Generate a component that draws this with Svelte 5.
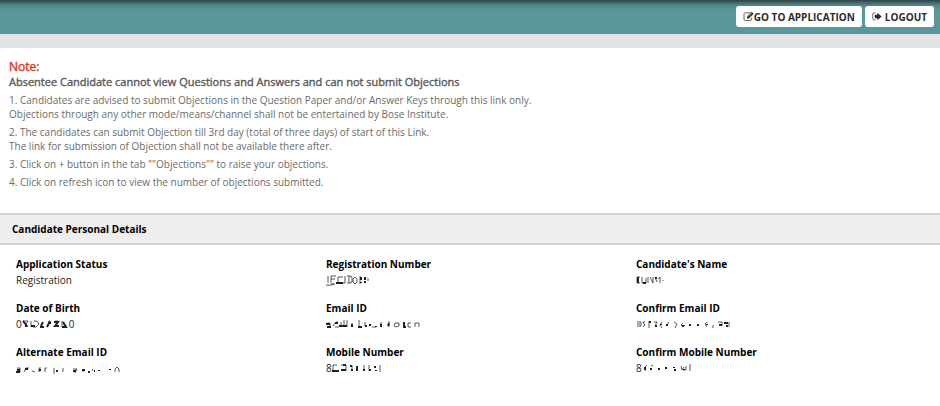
<script>
  const notes = [
    [
      "1. Candidates are advised to submit Objections in the Question Paper and/or Answer Keys through this link only.",
      "Objections through any other mode/means/channel shall not be entertained by Bose Institute.",
    ],
    [
      "2. The candidates can submit Objection till 3rd day (total of three days) of start of this Link.",
      "The link for submission of Objection shall not be available there after.",
    ],
    ['3. Click on + button in the tab ""Objections"" to raise your objections.'],
    ["4. Click on refresh icon to view the number of objections submitted."],
  ];

  // start / end are the readable characters, ink and thin are the smudges between them
  const details = [
    { label: "Application Status", start: "Registration" },
    {
      label: "Registration Number",
      width: 44,
      thin: "M2 2v7M0 11q4 1 8 -1M5 2h5M5 2v7M5 5h4M5 10h4M17 3h-5v6h5M19 2v7h-3M21 2h4l1 2v4l-2 1h-3M23 2v7M29 3l-2 2v3l2 2 2 -2v-3zM34 2v8M42 4v3",
      ink: "M10 9h7M35 3v3M35 8v1M39 3v3M39 7v2",
    },
    {
      label: "Candidate's Name",
      width: 28,
      thin: "M4 3h-3v6h3M6 3v6h4v-5M12 3v6M14 3l3 6M17 3v6M19 3l2 5M22 5l2 -2v6M27 6v1",
      ink: "M2 3v6M7 9h3M20 3v2",
    },
    {
      label: "Date of Birth",
      start: "0",
      width: 47,
      thin: "M1 3h5l-2 3 2 3M9 3v6M12 3h3l2 3 -3 3h-3M33 3l3 0M40 3v6",
      ink: "M1 3l4 5M4 6v3M9 8h4M19 8l2 -4M18 9h4M25 9l3 -6M26 5h3M32 4h4l-3 4h4M41 4l3 5h-4",
      end: "0",
    },
    {
      label: "Email ID",
      width: 95,
      thin: "M1 5h3v4M7 8l3 -4h2M9 9h4M15 4v5M18 2v7M21 2v7M26 9v-4M33 2v7M39 4v4M46 9h4M55 4v5M63 3v6M69 5l-1 3 2 1 3 -1 0 -3zM85 5h-3v4h3M89 9v-4h4v4",
      ink: "M0 6h4M1 9h4M9 5h3M13 8h8M26 6v3M32 9h4M39 8h2M44 6v2M50 8v1M55 6v3M62 8l1 -3M78 4v4M77 9h3",
    },
    {
      label: "Confirm Email ID",
      width: 95,
      thin: "M1 4h4v4h-4M1 6h3M9 4h-2l2 3 -2 2M13 3v7M18 4h3l-2 4M26 4l-2 3 2 3M33 4l-2 3M38 4l3 2 -2 4M47 5l-2 2 2 2 2 -2M71 4l-2 2 2 3M77 7v3M82 4h4v4M93 4v5",
      ink: "M13 4h2M19 8h2M25 6v1M31 6v2M46 8h2M54 6v2M62 6v2M71 6v1M83 7h3M88 5h4M91 7v2",
    },
    {
      label: "Alternate Email ID",
      width: 105,
      thin: "M1 6h3v4M8 10l2 -4h3M16 9l3 1M23 10v-4h2M29 10v-4h2M38 6v6M47 6v4M57 7h4l-2 4M67 9v1M76 9l1 -2M99 10v-3l2 -2 2 2v3",
      ink: "M0 10h4M1 8h3M9 7h3M23 8h2M41 8v2M57 9h3M66 8h3M72 10h2M78 9h1M83 8v1M94 7v1",
    },
    {
      label: "Mobile Number",
      start: "8",
      width: 50,
      thin: "M5 3h-4v6M9 3h5v6M20 3v6M32 3v6M37 3v6M48 3v7",
      ink: "M0 9h7M9 8h5M11 3h3M19 3v2M20 7v2M25 4v5M32 7v2M38 7v2M43 4v2M44 8v1",
    },
    {
      label: "Confirm Mobile Number",
      start: "8",
      width: 50,
      thin: "M5 3l-3 3 2 3M9 4l2 -1M39 4l1 4 2 -3M44 4v4h-3M48 2v7",
      ink: "M3 5v3M9 8v-2M17 6v2M24 5v2M32 5v1M33 7v2M42 7v1",
    },
  ];
</script>

<header class="topbar">
  <button type="button" class="btn">
    <svg class="edit" viewBox="0 0 11 11" aria-hidden="true">
      <path class="line" d="M7.2 1.8H2.4Q1 1.8 1 3.2v4.9q0 1.4 1.4 1.4h4.8q1.4 0 1.4-1.4V6.6" />
      <path d="M4 5.6 8.7.8l1.9 1.9L5.9 7.5H4z" />
      <path class="cut" d="m5.1 5.6 3.4-3.4" />
    </svg><span>GO TO APPLICATION</span>
  </button>
  <button type="button" class="btn">
    <svg class="exit" viewBox="0 0 10 11" aria-hidden="true">
      <path class="line" d="M3.5 1.8H2.2Q.8 1.8.8 3.2v4.4Q.8 9 2.2 9h1.3" />
      <path d="M5.4 1.8 9.6 5.5 5.4 9.2V7.2H2.8V3.8h2.6z" />
    </svg>
    LOGOUT
  </button>
</header>
<div class="strip"></div>

<main>
  <section class="note">
    <h1>Note:</h1>
    <h2>Absentee Candidate cannot view Questions and Answers and can not submit Objections</h2>
    {#each notes as lines}
      <p>
        {#each lines as line}
          <span>{line}</span>
        {/each}
      </p>
    {/each}
  </section>

  <section>
    <h3>Candidate Personal Details</h3>
    <dl class="details">
      {#each details as item}
        <div class="field">
          <dt>{item.label}</dt>
          <dd>
            {#if item.start}<span>{item.start}</span>{/if}
            {#if item.ink}
              <svg
                class="smudge"
                width={item.width}
                height="12"
                viewBox="0 0 {item.width} 12"
                aria-hidden="true"
              >
                <path class="thin" d={item.thin} />
                <path class="ink" d={item.ink} />
              </svg>
            {/if}
            {#if item.end}<span>{item.end}</span>{/if}
          </dd>
        </div>
      {/each}
    </dl>
  </section>
</main>

<style>
  :global(body) {
    margin: 0;
    background: #fff;
    font-family: "Open Sans", "Noto Sans", sans-serif;
    font-size: 10px;
    color: #000;
  }

  .topbar {
    display: flex;
    justify-content: flex-end;
    gap: 3px;
    padding: 6px 6px 7px;
    background: linear-gradient(#2f4345, #508587 5px, #5a979a 10px, #5a979a);
  }

  .btn {
    display: flex;
    align-items: center;
    gap: 3px;
    height: 21px;
    padding: 0 7px;
    border: 0;
    border-radius: 3px;
    background: #fff;
    color: #2b2b2b;
    font: bold 10px "Open Sans", "Noto Sans", sans-serif;
    cursor: pointer;
  }

  .btn:first-child {
    gap: 0;
  }

  .btn svg {
    height: 11px;
    fill: #2b2b2b;
  }

  .btn .edit {
    width: 11px;
  }

  .btn .exit {
    width: 10px;
  }

  .btn .line {
    fill: none;
    stroke: #555;
    stroke-width: 0.9;
  }

  .btn .cut {
    stroke: #fff;
    stroke-width: 0.6;
  }

  .strip {
    height: 14px;
    background: #e3e3e3;
  }

  .note {
    padding: 11px 9px 24px;
    color: #6b6b6b;
    line-height: 14px;
  }

  h1,
  h2,
  h3 {
    margin: 0;
    font-size: 10px;
  }

  h1,
  h2 {
    font-weight: 400;
    line-height: 15px;
    -webkit-text-stroke: 0.4px currentColor;
  }

  h1 {
    color: #e8311f;
    font-size: 12px;
  }

  h2 {
    color: #5c5c5c;
    font-size: 11px;
  }

  p {
    margin: 4px 0 0;
  }

  p span {
    display: block;
  }

  h3 {
    padding: 6px 12px;
    border-top: 2px solid #d2d2d2;
    border-bottom: 2px solid #d2d2d2;
    background: #eee;
    line-height: 16px;
  }

  .details {
    display: grid;
    grid-template-columns: repeat(3, 1fr);
    row-gap: 12px;
    margin: 0;
    padding: 11px 5px 24px;
    line-height: 16px;
  }

  .field {
    padding-left: 11px;
  }

  dt {
    font-weight: bold;
  }

  dd {
    display: flex;
    align-items: center;
    height: 16px;
    margin: 0;
    color: #222;
  }

  .smudge {
    fill: none;
    stroke: #1c2226;
  }

  .thin {
    stroke-width: 1;
    opacity: 0.75;
  }

  .ink {
    stroke-width: 2;
  }
</style>
